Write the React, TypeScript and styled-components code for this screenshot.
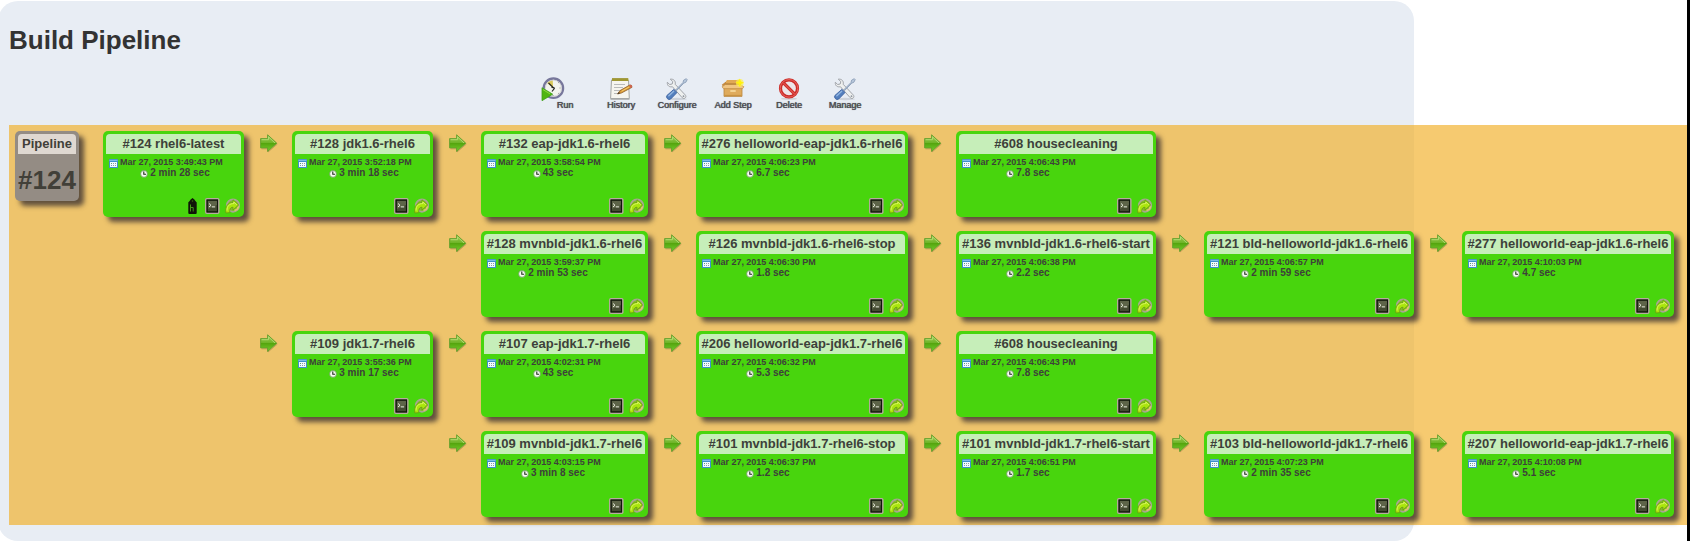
import React from "react";
import styled, { createGlobalStyle } from "styled-components";

const GlobalStyle = createGlobalStyle`
  * { box-sizing: border-box; }
  body {
    margin: 0;
    background: #fff;
    overflow: hidden;
    font-family: "Liberation Sans", Arial, sans-serif;
  }
`;

const Page = styled.div`
  display: flex;
  width: 1690px;
  height: 541px;
  padding-top: 1px;
  border-right: 3px solid #000;
  overflow: hidden;
`;

const Panel = styled.main`
  flex: none;
  width: 1416px;
  height: 540px;
  margin-left: -2px;
  padding: 0 0 16px 11px;
  border-radius: 20px;
  background: #e8edf4;
`;

const Title = styled.h1`
  margin: 0;
  padding-top: 24px;
  height: 76px;
  font-size: 26px;
  line-height: 30px;
  color: #333;
`;

const Toolbar = styled.nav`
  display: flex;
  height: 48px;
  padding-left: 528px;
`;

const Tool = styled.a<{ $shift?: number }>`
  display: flex;
  flex-direction: column;
  align-items: center;
  width: 56px;
  svg {
    flex: none;
    margin-right: ${(p) => p.$shift ?? 0}px;
  }
`;

const ToolLabel = styled.span`
  margin-top: -1px;
  font-size: 9px;
  line-height: 10px;
  white-space: nowrap;
  color: #4c4c50;
  text-shadow: 0.6px 0 0 #5c5c62, 0 0 1px #77777d;
`;

const Board = styled.section`
  display: flex;
  width: 1678px;
  height: 400px;
  padding: 6px 0 0 6px;
  background: rgba(241, 174, 36, 0.65);
`;

const Summary = styled.div`
  flex: none;
  width: 64px;
  height: 70px;
  margin-right: 24px;
  padding: 3px;
  border-radius: 5px;
  background: #948c84;
  box-shadow: 5px 5px 5px rgba(50, 42, 45, 0.75);
  color: #413f38;
`;

const Heading = styled.div<{ $bg: string }>`
  height: 20px;
  border-radius: 4px 4px 0 0;
  background: ${(p) => p.$bg};
  font-weight: bold;
  font-size: 13px;
  line-height: 20px;
  text-align: center;
  white-space: nowrap;
`;

const Revision = styled.div`
  margin: 10px -3px 0;
  font-weight: bold;
  font-size: 26px;
  line-height: 32px;
  text-align: center;
`;

const Stages = styled.div`
  display: grid;
  grid-template-columns: 141px 189px 215px 260px 248px 258px 260px;
  grid-auto-rows: 100px;
`;

const Stage = styled.div<{ $col: number; $row: number }>`
  display: flex;
  align-items: flex-start;
  grid-column: ${(p) => p.$col};
  grid-row: ${(p) => p.$row};
`;

const ArrowSlot = styled.div`
  flex: none;
  width: 48px;
  padding: 3px 0 0 16px;
  svg { display: block; }
`;

const Card = styled.article`
  display: flex;
  flex: 1;
  flex-direction: column;
  min-width: 0;
  height: 86px;
  padding: 3px;
  border-radius: 5px;
  background: #48d50d;
  box-shadow: 5px 5px 5px rgba(50, 42, 45, 0.75);
  color: #3d403a;
`;

const Info = styled.div`
  width: 138px;
  padding-top: 3px;
  font-weight: bold;
  white-space: nowrap;
`;

const Started = styled.div`
  display: flex;
  align-items: center;
  gap: 2px;
  height: 11px;
  padding-left: 3px;
  font-size: 9px;
  line-height: 11px;
  letter-spacing: -0.02px;
  svg { margin-top: 1px; }
`;

const Duration = styled.div`
  display: flex;
  justify-content: center;
  align-items: center;
  gap: 2px;
  height: 10px;
  font-size: 10px;
  line-height: 10px;
`;

const Actions = styled.div`
  display: flex;
  justify-content: flex-end;
  align-items: center;
  gap: 5px;
  height: 17px;
  margin-top: auto;
  padding-right: 1px;
`;

const TagSlot = styled.span`
  display: flex;
  margin-right: 3px;
`;

const ArrowIcon = () => (
  <svg width="18" height="19" viewBox="0 0 18 19">
    <defs>
      <linearGradient id="arrow" x1="0" y1="0" x2="0" y2="1">
        <stop offset="0" stopColor="#a3cf58" />
        <stop offset="0.48" stopColor="#6fb428" />
        <stop offset="0.52" stopColor="#55a50f" />
        <stop offset="1" stopColor="#74cf2c" />
      </linearGradient>
    </defs>
    <path d="M1.5 14.8H8V18L17.4 10" fill="none" stroke="#a5854a" strokeOpacity=".6" strokeWidth="1" />
    <path d="M.6 4.6H7.6V.8L16.8 9.2L7.6 17.4V13.9H.6Z" fill="url(#arrow)" stroke="#639f2c" strokeWidth=".9" />
    <path d="M1.6 5.7H8.5V2.9L15 9" fill="none" stroke="#b4db76" strokeWidth=".9" />
  </svg>
);

const CalendarIcon = () => (
  <svg width="9" height="9" viewBox="0 0 9 9">
    <rect width="9" height="9" rx=".6" fill="#3f8fc9" />
    <rect x=".5" y=".8" width="8" height="1.2" fill="#7fbce6" />
    <rect x="1" y="3" width="7" height="5" fill="#f1fbff" />
    <path d="M2 4.5h1" stroke="#5aa868" />
    <path d="M2 6.5h1" stroke="#7a8ec0" />
    <path d="M4 4.5h1M6 4.5h1M4 6.5h1M6 6.5h1" stroke="#8f9aa0" />
  </svg>
);

const ClockIcon = () => (
  <svg width="8" height="9" viewBox="0 0 8 9">
    <circle cx="4" cy="4.9" r="3.4" fill="#f7fbf3" stroke="#6d9a5e" strokeWidth=".8" />
    <path d="M3.8 2.6V5.3H6" fill="none" stroke="#1d2c1a" strokeWidth="1.1" />
  </svg>
);

const TerminalIcon = () => (
  <svg width="15" height="16" viewBox="0 0 15 16">
    <rect x=".8" y=".8" width="13" height="14.4" rx="1" fill="#343b24" stroke="#b9aaa0" strokeWidth="1.5" />
    <rect x="2.1" y="2.1" width="10.4" height="11.8" fill="#444b32" stroke="#10180b" strokeWidth="1.2" />
    <path d="M3 3h9v4L3 11z" fill="#6b7154" opacity=".65" />
    <path d="M4 5.5L6 7.3L4 9M6.8 8.9h3.4" fill="none" stroke="#f0f4e5" strokeWidth="1" />
  </svg>
);

const RerunIcon = () => (
  <svg width="15" height="16" viewBox="0 0 15 16">
    <circle cx="8" cy="7.6" r="6.2" fill="#84b92c" stroke="#a8a692" strokeWidth="1.8" />
    <path d="M9.5 12.4q3.4-.6 4-4" fill="none" stroke="#dfc96a" strokeWidth="1.6" />
    <path
      d="M.9 15C-.2 8.5 2.9 4.4 8 4.5V1.8L13.6 6.9L8 12V9.2C5 9.2 4.3 11.8 4.9 14.6Z"
      fill="#a9e60c"
      stroke="#6a9d12"
      strokeWidth=".8"
    />
    <path d="M2 12.6C2 8 4.5 5.5 8.8 5.6V4L11.8 6.8" fill="none" stroke="#dff56b" strokeWidth=".9" />
  </svg>
);

const TagIcon = () => (
  <svg width="9" height="16" viewBox="0 0 9 16">
    <path d="M.3 4.4L3 1.2L4.5 0L6 1.2L8.7 4.4V15Q8.7 16 7.7 16H1.3Q.3 16 .3 15Z" fill="#101408" />
    <circle cx="4.5" cy="3" r=".8" fill="#38720d" />
    <path d="M2.5 6.5V13.5M3 9.5H5.2V13.5" fill="none" stroke="#48a41a" strokeWidth=".9" />
  </svg>
);

const RunIcon = () => (
  <svg width="24" height="24" viewBox="0 0 24 24">
    <circle cx="12.4" cy="11.2" r="9.7" fill="#f3f4ed" stroke="#77779b" strokeWidth="2.3" />
    <circle cx="12.4" cy="11.2" r="8.1" fill="none" stroke="#cbcdd1" strokeWidth=".8" />
    <path d="M12 11L6.2 6A8 8 0 0 1 11.8 3.4Z" fill="#d9c95a" />
    <path d="M7.5 6L13.3 11.5L11 14.5M10.5 10.4l3 .2" fill="none" stroke="#282822" strokeWidth="1.2" />
    <path d="M18.5 11h1M12 18v1M17 6l.7-.6M17 16l.7.6" stroke="#888" />
    <path d="M1 10.7L11.7 17.2L1 23.7Z" fill="#4fb512" stroke="#3f9f1c" strokeWidth=".8" />
    <path d="M2 12.6L9 16.9" stroke="#8ed63f" />
  </svg>
);

const HistoryIcon = () => (
  <svg width="24" height="24" viewBox="0 0 24 24">
    <path d="M2.5 3H19.5L20.3 21.5H1.6Z" fill="#f6f5ef" stroke="#a3a5a2" />
    <path d="M3 1.2H19.4V4H3Z" fill="#c2b93a" />
    <path d="M4 1V4M6 1V4M8 1V4M10 1V4M12 1V4M14 1V4M16 1V4M18 1V4" stroke="#77702a" strokeWidth=".9" />
    <path d="M5 7.5H16M5 10.5H14M5 13.5H12M5 16.5H9" stroke="#b9bbbb" strokeWidth="1" />
    <path d="M8.5 17L11 13.6L20.8 8Q23.2 7.7 23 10.3L12.4 16Z" fill="#dc9a35" stroke="#8b5d2a" strokeWidth=".8" />
    <path d="M20.1 8.5L21.3 7.8Q23.5 7.6 23 10.3L21.7 11Z" fill="#cf6350" />
    <path d="M8.5 17L10 15L10.8 16.2Z" fill="#222" />
    <path d="M12.6 14.2L20 10" stroke="#f7cf6c" />
    <path d="M1.5 22.2H20.5" stroke="#a9abac" strokeWidth="1.2" />
  </svg>
);

const ToolsIcon = () => (
  <svg width="24" height="24" viewBox="0 0 24 24">
    <ellipse cx="12" cy="22" rx="10" ry="1.2" fill="#cdd2da" />
    <path
      d="M5.3 2.2L7.8 4.6L7.2 7L4.7 7.5L2.3 5.3C2 8.7 4.4 10.4 7.4 9.7L17.2 20.7C19.2 22.9 22.3 20 20.2 17.9L10.2 7.3C10.9 4.2 8.8 1.7 5.3 2.2Z"
      fill="#eef0ef"
      stroke="#979ba0"
      strokeWidth=".9"
    />
    <path d="M10.6 13L18 5.5L18.6 3.2L21.3 1.7L22.2 2.7L20.8 5.3L18.8 6.1L11.5 13.7Z" fill="#b9c9dd" stroke="#8094ae" strokeWidth=".8" />
    <path d="M8.8 12.4L12 15.5L5.7 22Q3.8 23.3 2.3 21.5T2 18.4Z" fill="#537fbd" stroke="#3b61a0" strokeWidth=".9" />
    <path d="M9 14L3.4 19.3" stroke="#94b7e1" strokeWidth="1.3" />
    <circle cx="18.5" cy="19.2" r=".9" fill="#8e959f" />
  </svg>
);

const BoxIcon = () => (
  <svg width="24" height="24" viewBox="0 0 24 24">
    <path d="M3 10.5H21V19.4H3Z" fill="#dfab5c" stroke="#b9853d" strokeWidth=".8" />
    <path d="M4 5H20V9H4Z" fill="#a8732f" />
    <path d="M4.5 5L6 3H18L19.5 5V6.5H4.5Z" fill="#e0a855" />
    <path d="M4 5.2L.8 7.8L1.8 9.2L5.2 7.2Z" fill="#c58b40" />
    <path d="M4.5 7.5H19.5L23 9.8L21.6 11.6H2.4L1 9.8Z" fill="#f0c582" stroke="#bb8640" strokeWidth=".6" />
    <path d="M9.3 14H14.7" stroke="#fae0a6" strokeWidth="1.5" />
    <path d="M3.5 18.4H20.5" stroke="#c8913f" />
    <circle cx="18.8" cy="5.8" r="3.9" fill="#fff04a" opacity=".7" />
    <path d="M18.8 1.5L20 4.6L23 5.8L20 7L18.8 10.2L17.6 7L14.5 5.8L17.6 4.6Z" fill="#fff20c" />
  </svg>
);

const DeleteIcon = () => (
  <svg width="24" height="24" viewBox="0 0 24 24">
    <ellipse cx="12" cy="21.8" rx="8" ry="1" fill="#ced1d6" />
    <circle cx="12" cy="11.4" r="8.5" fill="#ece6e8" stroke="#cb2c28" strokeWidth="3.2" />
    <path d="M6.2 5.6L17.8 17.2" stroke="#cb2c28" strokeWidth="3.2" />
    <circle cx="12" cy="11.4" r="8.8" fill="none" stroke="#e8625c" strokeWidth="1" />
    <path d="M6.4 5.8L17.6 17" stroke="#e1544d" strokeWidth="1.2" />
  </svg>
);

const tools: { label: string; icon: React.ReactNode; shift?: number }[] = [
  { label: "Run", icon: <RunIcon />, shift: 25 },
  { label: "History", icon: <HistoryIcon /> },
  { label: "Configure", icon: <ToolsIcon /> },
  { label: "Add Step", icon: <BoxIcon /> },
  { label: "Delete", icon: <DeleteIcon /> },
  { label: "Manage", icon: <ToolsIcon /> },
];

type Build = { row: number; col: number; name: string; time: string; took: string; tagged?: boolean };

const builds: Build[] = [
  { row: 1, col: 1, name: "#124 rhel6-latest", time: "3:49:43", took: "2 min 28 sec", tagged: true },
  { row: 1, col: 2, name: "#128 jdk1.6-rhel6", time: "3:52:18", took: "3 min 18 sec" },
  { row: 1, col: 3, name: "#132 eap-jdk1.6-rhel6", time: "3:58:54", took: "43 sec" },
  { row: 1, col: 4, name: "#276 helloworld-eap-jdk1.6-rhel6", time: "4:06:23", took: "6.7 sec" },
  { row: 1, col: 5, name: "#608 housecleaning", time: "4:06:43", took: "7.8 sec" },
  { row: 2, col: 3, name: "#128 mvnbld-jdk1.6-rhel6", time: "3:59:37", took: "2 min 53 sec" },
  { row: 2, col: 4, name: "#126 mvnbld-jdk1.6-rhel6-stop", time: "4:06:30", took: "1.8 sec" },
  { row: 2, col: 5, name: "#136 mvnbld-jdk1.6-rhel6-start", time: "4:06:38", took: "2.2 sec" },
  { row: 2, col: 6, name: "#121 bld-helloworld-jdk1.6-rhel6", time: "4:06:57", took: "2 min 59 sec" },
  { row: 2, col: 7, name: "#277 helloworld-eap-jdk1.6-rhel6", time: "4:10:03", took: "4.7 sec" },
  { row: 3, col: 2, name: "#109 jdk1.7-rhel6", time: "3:55:36", took: "3 min 17 sec" },
  { row: 3, col: 3, name: "#107 eap-jdk1.7-rhel6", time: "4:02:31", took: "43 sec" },
  { row: 3, col: 4, name: "#206 helloworld-eap-jdk1.7-rhel6", time: "4:06:32", took: "5.3 sec" },
  { row: 3, col: 5, name: "#608 housecleaning", time: "4:06:43", took: "7.8 sec" },
  { row: 4, col: 3, name: "#109 mvnbld-jdk1.7-rhel6", time: "4:03:15", took: "3 min 8 sec" },
  { row: 4, col: 4, name: "#101 mvnbld-jdk1.7-rhel6-stop", time: "4:06:37", took: "1.2 sec" },
  { row: 4, col: 5, name: "#101 mvnbld-jdk1.7-rhel6-start", time: "4:06:51", took: "1.7 sec" },
  { row: 4, col: 6, name: "#103 bld-helloworld-jdk1.7-rhel6", time: "4:07:23", took: "2 min 35 sec" },
  { row: 4, col: 7, name: "#207 helloworld-eap-jdk1.7-rhel6", time: "4:10:08", took: "5.1 sec" },
];

export default function App() {
  return (
    <>
      <GlobalStyle />
      <Page>
        <Panel>
          <Title>Build Pipeline</Title>
          <Toolbar>
            {tools.map((tool) => (
              <Tool key={tool.label} $shift={tool.shift}>
                {tool.icon}
                <ToolLabel>{tool.label}</ToolLabel>
              </Tool>
            ))}
          </Toolbar>
          <Board>
            <Summary>
              <Heading $bg="#dfd8d1">Pipeline</Heading>
              <Revision>#124</Revision>
            </Summary>
            <Stages>
              {builds.map((build) => (
                <Stage key={`${build.row}-${build.col}`} $col={build.col} $row={build.row}>
                  {build.col > 1 && (
                    <ArrowSlot>
                      <ArrowIcon />
                    </ArrowSlot>
                  )}
                  <Card>
                    <Heading $bg="#c6eeb9">{build.name}</Heading>
                    <Info>
                      <Started>
                        <CalendarIcon />
                        <span>Mar 27, 2015 {build.time} PM</span>
                      </Started>
                      <Duration>
                        <ClockIcon />
                        <span>{build.took}</span>
                      </Duration>
                    </Info>
                    <Actions>
                      {build.tagged && (
                        <TagSlot>
                          <TagIcon />
                        </TagSlot>
                      )}
                      <TerminalIcon />
                      <RerunIcon />
                    </Actions>
                  </Card>
                </Stage>
              ))}
            </Stages>
          </Board>
        </Panel>
      </Page>
    </>
  );
}
